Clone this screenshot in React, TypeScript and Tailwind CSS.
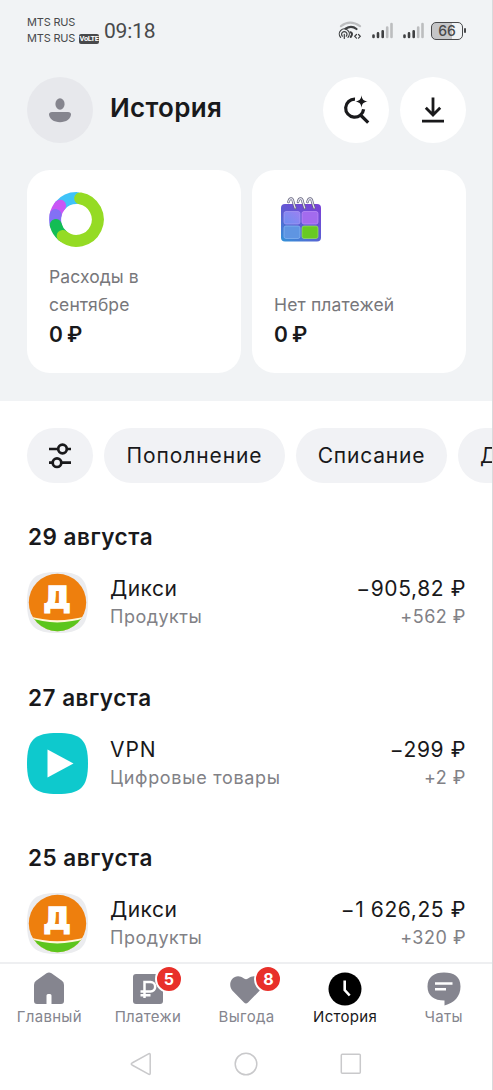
import React from 'react';

type Operation = {
  date: string;
  title: string;
  category: string;
  amount: string;
  bonus: string;
  logo: 'dixy' | 'play';
  titleClass: string;
  categoryClass: string;
};

const operations: Operation[] = [
  {
    date: '29 августа',
    title: 'Дикси',
    category: 'Продукты',
    amount: '−905,82 ₽',
    bonus: '+562 ₽',
    logo: 'dixy',
    titleClass: 'tracking-[0.5px]',
    categoryClass: 'tracking-[0.5px]',
  },
  {
    date: '27 августа',
    title: 'VPN',
    category: 'Цифровые товары',
    amount: '−299 ₽',
    bonus: '+2 ₽',
    logo: 'play',
    titleClass: 'tracking-[0.9px]',
    categoryClass: 'tracking-[0.7px]',
  },
  {
    date: '25 августа',
    title: 'Дикси',
    category: 'Продукты',
    amount: '−1 626,25 ₽',
    bonus: '+320 ₽',
    logo: 'dixy',
    titleClass: 'tracking-[0.5px]',
    categoryClass: 'tracking-[0.5px]',
  },
];

function Signal() {
  return (
    <svg width="21" height="17" viewBox="0 0 21 17" strokeWidth="2.6" strokeLinecap="round">
      <path d="M1.5 15v-1.4M6 15v-3.6M10.7 15V9.2" stroke="#3f4042" />
      <path d="M15.2 15V5.5M19.5 15V2" stroke="#bcbdbf" />
    </svg>
  );
}

function StatusBar() {
  return (
    <div className="flex h-[77px] items-start pl-[27px] pr-[26px] text-[#48494b]">
      <div className="flex w-[77px] flex-col pt-[15px] text-[11px] leading-[15.5px]">
        <span className="whitespace-nowrap tracking-[-0.2px]">MTS RUS</span>
        <span className="flex items-center whitespace-nowrap tracking-[-0.2px]">
          MTS RUS
          <span className="ml-[4px] mt-[1px] flex h-[10px] w-[20px] items-center justify-center rounded-[2px] bg-[#48494b] font-['Roboto'] text-[7.5px] font-bold leading-none tracking-[-0.4px] text-white">
            VoLTE
          </span>
        </span>
      </div>
      <span className="pt-[17px] font-['Roboto'] text-[21px] leading-[28px] tracking-[-0.2px]">09:18</span>
      <div className="ml-auto flex items-center gap-[10px] pt-[21px]">
        <svg width="24" height="19" viewBox="0 0 24 19" fill="none" strokeLinecap="round">
          <path d="M3 5.2Q12-1.800 22 5.200" stroke="#bcbdbf" strokeWidth="2.2" />
          <path d="M7.500 7.600Q13.500 3.800 18.500 8" stroke="#3f4042" strokeWidth="2.2" />
          <g stroke="#3f4042" strokeWidth="1.200">
            <path d="M2.600 16.300a5 5 0 1 1 7.400 0" />
            <path d="M4.400 15.200a2.700 2.700 0 1 1 3.800 0M6.300 13.400v4" />
            <path d="M12.500 11.200q2.200.8 1.200 3.200l-1 1.600" strokeWidth="2" />
            <path d="m18.500 13.500-1.800 1.800 1.800 1.800M20.500 13.500l1.800 1.800-1.800 1.800" />
          </g>
        </svg>
        <Signal />
        <Signal />
        <div className="-ml-[3px] flex items-center gap-[1px]">
          <div className="flex h-[18px] w-[32px] items-center justify-center rounded-[5px] border-[1.5px] border-[#48494b] bg-[linear-gradient(90deg,#c5c6c8_66%,#f1f3f5_66%)] text-[14px] font-medium leading-none">
            66
          </div>
          <div className="h-[5px] w-[2px] rounded-full bg-[#48494b]" />
        </div>
      </div>
    </div>
  );
}

function Header() {
  return (
    <div className="flex h-[66px] items-center pl-[27px] pr-[26px]">
      <div className="flex size-[66px] items-center justify-center rounded-full bg-[#e7e8ec]">
        <svg width="24" height="26" viewBox="0 0 24 26" fill="#85858e">
          <ellipse cx="12" cy="7" rx="4.600" ry="5.700" />
          <path d="M4 15h16c2 0 3 1 3 2.300 0 4.400-5 8-11 8S1 21.700 1 17.300C1 16 2 15 4 15Z" />
        </svg>
      </div>
      <h1 className="-mt-[4px] ml-[17px] text-[26px] font-[560] leading-[34px] tracking-[0.3px]">История</h1>
      <button type="button" aria-label="Поиск" className="ml-auto flex size-[66px] items-center justify-center rounded-full bg-white">
        <svg width="28" height="32" viewBox="0 0 28 32" fill="none" stroke="#19191b" strokeWidth="3.2">
          <path d="M13 5.200A9 9 0 1 0 21.600 15.200M18 20.500l8.200 8.200" />
          <path d="M19.500 1.300c.6 4.200 1.900 5.500 6.200 6.200-4.300.8-5.600 2-6.200 6.200-.6-4.200-1.900-5.400-6.200-6.200 4.300-.7 5.600-2 6.200-6.200Z" fill="#19191b" stroke="none" />
        </svg>
      </button>
      <button type="button" aria-label="Скачать" className="ml-[11px] flex size-[66px] items-center justify-center rounded-full bg-white">
        <svg width="24" height="26" viewBox="0 0 24 26" fill="none" stroke="#19191b" strokeWidth="2.800">
          <path d="M12 .5v17M4.800 10.800l7.200 7.200 7.200-7.200M1 24.200h22" />
        </svg>
      </button>
    </div>
  );
}

function ExpensesRing() {
  return (
    <svg width="55" height="55" viewBox="0 0 55 55" fill="none" strokeWidth="12" strokeLinecap="round">
      <path d="M27.500 6.100A21.400 21.400 0 0 0 11.100 13.700" stroke="#3fc3f8" />
      <path d="M11.100 13.700A21.400 21.400 0 0 0 6.600 23.100" stroke="#c956f5" />
      <path d="M6.600 23.100A21.400 21.400 0 0 0 6.800 33" stroke="#8370f5" />
      <path d="M6.800 33A21.400 21.400 0 0 0 13.700 43.900" stroke="#12bd54" />
      <path d="M13.700 43.900A21.400 21.400 0 1 0 31.200 6.400" stroke="#95db24" />
    </svg>
  );
}

function CalendarIcon() {
  return (
    <svg width="42" height="46" viewBox="0 0 42 46">
      <defs>
        <linearGradient id="calendar" x1="0" y1="1" x2="0.7" y2="0">
          <stop offset="0" stopColor="#3294d8" />
          <stop offset="0.5" stopColor="#5a60d2" />
          <stop offset="1" stopColor="#7744d6" />
        </linearGradient>
        <linearGradient id="cell" x1="0" y1="1" x2="1" y2="0">
          <stop offset="0" stopColor="#6d8ff0" />
          <stop offset="1" stopColor="#9b80f2" />
        </linearGradient>
      </defs>
      <rect x="1" y="7" width="40" height="37.500" rx="4" fill="url(#calendar)" />
      <rect x="4" y="14.500" width="16" height="12.500" rx="2" fill="url(#cell)" stroke="#a99cf5" strokeWidth=".7" />
      <rect x="22" y="14.500" width="16" height="12.500" rx="2" fill="#a36bee" stroke="#be91f8" strokeWidth=".7" />
      <rect x="4" y="29" width="16" height="12.500" rx="2" fill="#5f95e2" stroke="#8ab7f2" strokeWidth=".7" />
      <rect x="22" y="29" width="16" height="12.500" rx="2" fill="#68ca23" stroke="#9be365" strokeWidth=".7" />
      <g fill="none" strokeLinecap="round">
        <path d="M8.500 5c1-4.500 4.300-4.500 4.700 0l2 6M18 5c1-4.500 4.300-4.500 4.700 0l2 6M27.500 5c1-4.500 4.300-4.500 4.700 0l2 6" stroke="#65647c" strokeWidth="2.600" />
        <path d="M8.500 5c1-4.500 4.300-4.500 4.700 0l2 6M18 5c1-4.500 4.300-4.500 4.700 0l2 6M27.500 5c1-4.500 4.300-4.500 4.700 0l2 6" stroke="#e4e4f0" strokeWidth="1.200" />
      </g>
    </svg>
  );
}

function Summary() {
  return (
    <div className="mt-[27px] flex gap-[11px] pl-[27px]">
      <div className="flex h-[203px] w-[214px] shrink-0 flex-col rounded-[23px] bg-white px-[22px] pb-[24px] pt-[22px]">
        <ExpensesRing />
        <p className="mt-auto text-[17.5px] leading-[28px] tracking-[0.1px] text-[#77777b]">
          Расходы в<br />сентябре
        </p>
        <p className="mt-[2px] text-[21px] font-[560] leading-[28px] tracking-[-0.6px]">0 ₽</p>
      </div>
      <div className="flex h-[203px] w-[214px] shrink-0 flex-col rounded-[23px] bg-white px-[22px] pb-[24px] pt-[27px]">
        <div className="pl-[6px]">
          <CalendarIcon />
        </div>
        <p className="mt-auto text-[17.5px] leading-[28px] tracking-[0.15px] text-[#77777b]">Нет платежей</p>
        <p className="mt-[2px] text-[21px] font-[560] leading-[28px] tracking-[-0.6px]">0 ₽</p>
      </div>
    </div>
  );
}

function Filters() {
  return (
    <div className="flex gap-[11px] overflow-hidden pl-[27px] pt-[27px]">
      <button type="button" aria-label="Фильтры" className="flex h-[55px] w-[66px] shrink-0 items-center justify-center rounded-full bg-[#f1f2f5]">
        <svg width="24" height="26" viewBox="0 0 24 26" fill="none" stroke="#19191b" strokeWidth="2.700">
          <path d="M1 6h9M19 6h4M1 19.700h3.500M13.500 19.700H23" />
          <circle cx="14.500" cy="6" r="4.300" />
          <circle cx="9" cy="19.700" r="4.300" />
        </svg>
      </button>
      <button type="button" className="flex h-[55px] w-[181px] shrink-0 items-center justify-center rounded-full bg-[#f1f2f5] text-[21px] tracking-[0.9px]">
        Пополнение
      </button>
      <button type="button" className="flex h-[55px] w-[151px] shrink-0 items-center justify-center rounded-full bg-[#f1f2f5] text-[21px] tracking-[0.8px]">
        Списание
      </button>
      <button type="button" className="flex h-[55px] w-[120px] shrink-0 items-center rounded-full bg-[#f1f2f5] pl-[22px] text-[21px]">
        Д
      </button>
    </div>
  );
}

function Logo({ kind }: { kind: Operation['logo'] }) {
  if (kind === 'play') {
    return (
      <svg width="61" height="61" viewBox="0 0 61 61">
        <path d="M30.500 0C53 0 61 6 61 30.500S53 61 30.500 61 0 55 0 30.500 8 0 30.500 0Z" fill="#0ec9cd" />
        <path d="M20.500 16.500v28l26-14Z" fill="#fff" />
      </svg>
    );
  }
  return (
    <svg width="61" height="61" viewBox="0 0 61 61">
      <defs>
        <clipPath id="dixy">
          <circle cx="30.500" cy="30.500" r="28.700" />
        </clipPath>
      </defs>
      <path d="M30.500 0C53 0 61 6 61 30.500S53 61 30.500 61 0 55 0 30.500 8 0 30.500 0Z" fill="#ebecef" />
      <g clipPath="url(#dixy)">
        <rect width="61" height="61" fill="#ee7f0d" />
        <path d="M0 43.500Q30 53 61 43.500v18H0Z" fill="#fff8d8" />
        <path d="M0 45Q30 56 61 45v17H0Z" fill="#5cc51d" />
      </g>
      <text x="30" y="35.700" textAnchor="middle" fill="#fff" stroke="#fff" strokeWidth="1.600" fontSize="31" fontWeight="700" fontFamily="DejaVu Sans, sans-serif">
        Д
      </text>
    </svg>
  );
}

function OperationRow({ item }: { item: Operation }) {
  return (
    <section className="h-[160.500px] pl-[27px] pr-[26px]">
      <h2 className="pl-[1px] text-[22.5px] font-[560] leading-[29px] tracking-[0.5px]">{item.date}</h2>
      <div className="mt-[21px] flex h-[61px] items-center">
        <Logo kind={item.logo} />
        <div className="ml-[22px] flex flex-col pt-[1px]">
          <span className={`text-[21px] leading-[28px] ${item.titleClass}`}>{item.title}</span>
          <span className={`text-[18px] leading-[28px] text-[#818186] ${item.categoryClass}`}>{item.category}</span>
        </div>
        <div className="ml-auto flex flex-col items-end pt-[1px]">
          <span className="text-[21px] leading-[28px] tracking-[0.6px]">{item.amount}</span>
          <span className="text-[18px] leading-[28px] tracking-[0.5px] text-[#818186]">{item.bonus}</span>
        </div>
      </div>
    </section>
  );
}

function Badge({ value }: { value: number }) {
  return (
    <span className="absolute -right-[19px] -top-[7px] flex size-[28px] items-center justify-center rounded-full border-2 border-white bg-[#e8302a] text-[16px] font-bold text-white">
      {value}
    </span>
  );
}

function TabBar() {
  const label = 'mt-[1px] text-[15px] leading-[20px] whitespace-nowrap tracking-[0.3px]';
  const tab = 'flex w-[98.6px] shrink-0 flex-col items-center pt-[8px]';
  return (
    <nav className="flex h-[76px] shrink-0 border-t-2 border-[#eeeff1] text-[#85858e]">
      <div className={tab}>
        <svg width="32" height="34" viewBox="0 0 32 34" fill="#85858f">
          <path d="M13.500 1.200Q16-.2 18.500 1.200L29 8.800q2 1.500 2 4.200V29q0 3-3 3h-9.500v-8.500q0-1.500-1.500-1.500h-2q-1.500 0-1.500 1.500V32H4q-3 0-3-3V13q0-2.700 2-4.200Z" />
        </svg>
        <span className={label}>Главный</span>
      </div>
      <div className={tab}>
        <div className="relative">
          <svg width="32" height="34" viewBox="0 0 32 34">
            <rect x="1" y="2" width="30" height="30" rx="3" fill="#85858f" />
            <path d="M12.500 26V10h6a4.700 4.700 0 0 1 0 9.400H8.500M8.500 23.300h10" fill="none" stroke="#fff" strokeWidth="2.500" />
          </svg>
          <Badge value={5} />
        </div>
        <span className={label}>Платежи</span>
      </div>
      <div className={tab}>
        <div className="relative">
          <svg width="34" height="34" viewBox="0 0 34 34" fill="#85858f">
            <path d="M15 30.500 3.500 18.800C-3 11 5.500-.5 15 6.500q2 1.500 4 0c9.500-7 18 4.500 11.500 12.300L19 30.500q-2 1.800-4 0Z" />
          </svg>
          <Badge value={8} />
        </div>
        <span className={label}>Выгода</span>
      </div>
      <div className={`${tab} text-[#19191b]`}>
        <svg width="34" height="34" viewBox="0 0 34 34">
          <circle cx="17" cy="17" r="16.500" fill="#000" />
          <path d="M16.700 8.500V18l5 5.500" fill="none" stroke="#fff" strokeWidth="2.600" />
        </svg>
        <span className={label}>История</span>
      </div>
      <div className={tab}>
        <svg width="34" height="34" viewBox="0 0 34 34">
          <path d="M17 .5c10 0 16.500 4 16.500 14 0 9.500-6 16.500-16 19v-5C7 28.500.5 24 .5 14.500S7 .5 17 .5Z" fill="#85858f" />
          <path d="M8 11.500h17.500M8 17.200h11" stroke="#fff" strokeWidth="2.600" />
        </svg>
        <span className={label}>Чаты</span>
      </div>
    </nav>
  );
}

function SystemBar() {
  return (
    <div className="flex h-[52px] items-center justify-center gap-[82px]">
      <svg width="22" height="24" viewBox="0 0 22 24" fill="none" stroke="#c9c9cb" strokeWidth="1.500" strokeLinejoin="round">
        <path d="M19 1.700 2 11q-1.500 1 0 2l17 9.300q1.200.4 1.200-1V2.700q0-1.400-1.200-1Z" />
      </svg>
      <svg width="24" height="24" viewBox="0 0 24 24" fill="none" stroke="#c9c9cb" strokeWidth="1.500">
        <circle cx="12" cy="12" r="10.800" />
      </svg>
      <svg width="22" height="24" viewBox="0 0 22 24" fill="none" stroke="#c9c9cb" strokeWidth="1.500">
        <rect x="1.300" y="2.300" width="19" height="19" rx="1" />
      </svg>
    </div>
  );
}

export default function App() {
  return (
    <div className="flex h-[1090px] w-[493px] flex-col overflow-hidden border-r border-[#d9dadc] bg-white font-['Inter','Noto_Sans',sans-serif] text-[#19191b]">
      <div className="h-[401px] shrink-0 bg-[#f1f3f5]">
        <StatusBar />
        <Header />
        <Summary />
      </div>
      <main className="h-[561px] shrink-0 overflow-hidden">
        <Filters />
        <div className="pt-[39px]">
          {operations.map((item) => (
            <OperationRow key={item.date} item={item} />
          ))}
        </div>
      </main>
      <TabBar />
      <SystemBar />
    </div>
  );
}
